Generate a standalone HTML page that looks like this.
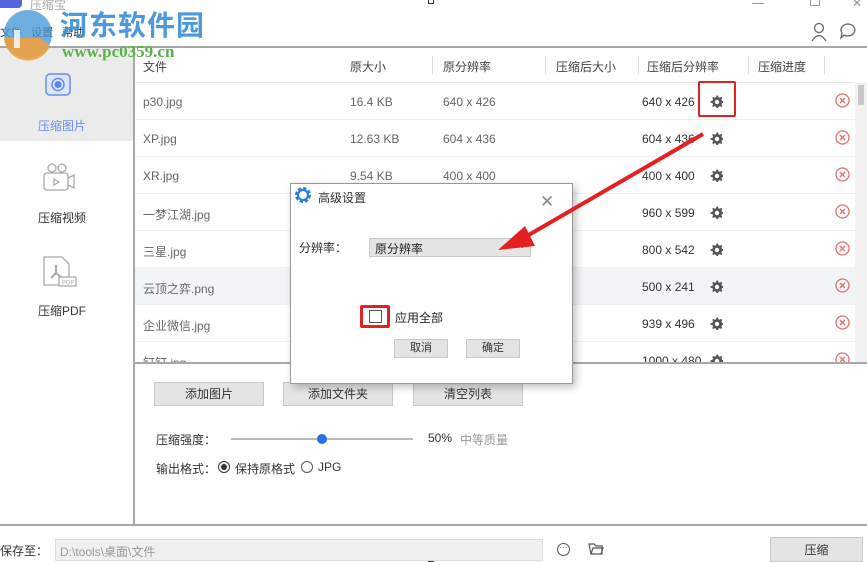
<!DOCTYPE html><html><head><meta charset="utf-8"><style>
*{margin:0;padding:0;box-sizing:border-box}
body{width:867px;height:562px;overflow:hidden;background:#fff;position:relative;font-family:"Liberation Sans","Noto Sans CJK SC",sans-serif;font-size:12px;color:#666}
.a{position:absolute;white-space:nowrap}
.row{position:absolute;left:135px;width:720px;height:37px;border-bottom:1px solid #eef0f2}
.row span{position:absolute;top:12px}
.g{position:absolute;left:575px;top:12px;width:13px;height:13px}
.x{position:absolute;left:700px;top:10px;width:15px;height:15px}
.btn{position:absolute;background:#e4e4e4;border:1px solid #c8c8c8;text-align:center;color:#333}
.logo{z-index:5}
</style></head><body>
<svg width="0" height="0" style="position:absolute"><defs>
<g id="gear"><path d="M6.5 0.5 L8 0.5 L8.4 2.2 L9.8 2.8 L11.3 1.9 L12.3 2.9 L11.4 4.4 L12 5.8 L13.5 6.2 L13.5 7.7 L12 8.1 L11.4 9.5 L12.3 11 L11.3 12 L9.8 11.1 L8.4 11.7 L8 13.3 L6.5 13.3 L6.1 11.7 L4.7 11.1 L3.2 12 L2.2 11 L3.1 9.5 L2.5 8.1 L0.5 7.7 L0.5 6.2 L2.5 5.8 L3.1 4.4 L2.2 2.9 L3.2 1.9 L4.7 2.8 L6.1 2.2Z" fill="#555"/><circle cx="7" cy="7" r="2.2" fill="#fff"/></g>
<g id="xx"><circle cx="7.5" cy="7.5" r="6.5" fill="none" stroke="#e07070" stroke-width="1.3"/><path d="M5 5 L10 10 M10 5 L5 10" stroke="#e07070" stroke-width="1.3"/></g>
</defs></svg>
<!-- title area -->
<div class="a" style="left:0;top:0;width:22px;height:8px;background:#5566dd;border-radius:0 0 4px 0"></div>
<div class="a" style="left:30px;top:-4px;color:#aaa;font-size:12px">压缩宝</div>
<div class="a" style="left:428px;top:-2px;width:6px;height:6px;border:1px solid #333"></div>
<div class="a" style="left:428px;top:556px;width:6px;height:6px;border:1px solid #333"></div>
<div class="a" style="left:752px;top:3px;width:12px;height:1px;background:#999"></div>
<div class="a" style="left:810px;top:-2px;width:10px;height:8px;border:1px solid #999"></div>
<div class="a" style="left:852px;top:-4px;color:#999;font-size:12px">✕</div>
<div class="a" style="left:0;top:24px;color:#333;font-size:11px">文件 &nbsp; 设置 &nbsp; 帮助</div>
<svg class="a logo" style="left:0;top:8px" width="60" height="56"><circle cx="28" cy="26" r="24" fill="#4a9ad8" opacity=".8"/><path d="M4 30 A24 24 0 0 0 50 38 L40 30 Z" fill="#f0a040" opacity=".9"/><rect x="14" y="22" width="6" height="18" fill="#fff" opacity=".8"/></svg>
<div class="a logo" style="left:60px;top:4px;font-size:28px;font-weight:bold;color:#3a8fd8;letter-spacing:1px;opacity:.9">河东软件园</div>
<div class="a logo" style="left:62px;top:42px;font-size:17px;font-weight:bold;color:#5ab04a;font-family:'Liberation Serif',serif">www.pc0359.cn</div>
<svg class="a" style="left:810px;top:22px" width="18" height="20"><circle cx="9" cy="6" r="4.5" fill="none" stroke="#666" stroke-width="1.3"/><path d="M2 19 Q9 8 16 19" fill="none" stroke="#666" stroke-width="1.3"/></svg>
<svg class="a" style="left:839px;top:22px" width="18" height="18"><path d="M9 2 A7 6 0 1 1 5 13 L2 16 L3 11 A7 6 0 0 1 9 2Z" fill="none" stroke="#666" stroke-width="1.3"/></svg>
<!-- borders -->
<div class="a" style="left:0;top:46px;width:867px;height:2px;background:#a8a8a8"></div>
<div class="a" style="left:133px;top:47px;width:2px;height:478px;background:#a8a8a8"></div>
<div class="a" style="left:0;top:524px;width:867px;height:2px;background:#a8a8a8"></div>
<!-- sidebar -->
<div class="a" style="left:0;top:48px;width:133px;height:93px;background:#ebebeb"></div>
<svg class="a" style="left:44px;top:71px" width="28" height="28"><rect x="2" y="3" width="24" height="21" rx="4" fill="#dde6fb" stroke="#6a8ef0" stroke-width="1.5"/><circle cx="14" cy="13.5" r="6" fill="none" stroke="#6a8ef0" stroke-width="1.5"/><circle cx="14" cy="13.5" r="3.5" fill="#5a86f5"/></svg>
<div class="a" style="left:38px;top:117px;color:#6b8ef0">压缩图片</div>
<svg class="a" style="left:42px;top:163px" width="34" height="30" fill="none" stroke="#aaa" stroke-width="1.3"><circle cx="10" cy="5" r="4"/><circle cx="20" cy="5" r="4"/><rect x="2" y="10" width="24" height="17" rx="3"/><path d="M26 15 L32 12 L32 25 L26 22"/><path d="M12 16 L17 19 L12 22Z"/></svg>
<div class="a" style="left:38px;top:209px;color:#333">压缩视频</div>
<svg class="a" style="left:42px;top:255px" width="36" height="34" fill="none" stroke="#aaa" stroke-width="1.3"><path d="M2 2 H20 L27 9 V30 H2Z"/><path d="M14 10 V18 M14 18 L9 23 M14 18 L20 23" stroke-width="2"/><rect x="17" y="22" width="17" height="9" fill="#fff"/><text x="20" y="29.5" font-size="6" fill="#aaa" stroke="none" font-family="Liberation Sans">PDF</text></svg>
<div class="a" style="left:38px;top:302px;color:#333">压缩PDF</div>
<!-- table header -->
<div class="row" style="top:47px;height:36px;border-bottom:1px solid #e8e8e8;color:#444">
<span style="left:8px;top:11px">文件</span><span style="left:215px;top:11px">原大小</span><span style="left:308px;top:11px">原分辨率</span><span style="left:421px;top:11px">压缩后大小</span><span style="left:512px;top:11px">压缩后分辨率</span><span style="left:623px;top:11px">压缩进度</span>
</div>
<div class="a" style="left:432px;top:56px;width:1px;height:18px;background:#ddd"></div>
<div class="a" style="left:545px;top:56px;width:1px;height:18px;background:#ddd"></div>
<div class="a" style="left:638px;top:56px;width:1px;height:18px;background:#ddd"></div>
<div class="a" style="left:748px;top:56px;width:1px;height:18px;background:#ddd"></div>
<div class="a" style="left:824px;top:56px;width:1px;height:18px;background:#ddd"></div>
<div class="a" style="left:855px;top:83px;width:12px;height:280px;background:#f2f2f2"></div>
<div class="a" style="left:858px;top:85px;width:6px;height:20px;background:#c8c8c8"></div>
<div class="row" style="top:83px"><span style="left:8px">p30.jpg</span><span style="left:215px">16.4 KB</span><span style="left:308px">640 x 426</span><span style="left:507px;color:#333">640 x 426</span><svg class="g"><use href="#gear"/></svg><svg class="x"><use href="#xx"/></svg></div>
<div class="row" style="top:120px"><span style="left:8px">XP.jpg</span><span style="left:215px">12.63 KB</span><span style="left:308px">604 x 436</span><span style="left:507px;color:#333">604 x 436</span><svg class="g"><use href="#gear"/></svg><svg class="x"><use href="#xx"/></svg></div>
<div class="row" style="top:157px"><span style="left:8px">XR.jpg</span><span style="left:215px">9.54 KB</span><span style="left:308px">400 x 400</span><span style="left:507px;color:#333">400 x 400</span><svg class="g"><use href="#gear"/></svg><svg class="x"><use href="#xx"/></svg></div>
<div class="row" style="top:194px"><span style="left:8px">一梦江湖.jpg</span><span style="left:507px;color:#333">960 x 599</span><svg class="g"><use href="#gear"/></svg><svg class="x"><use href="#xx"/></svg></div>
<div class="row" style="top:231px"><span style="left:8px">三星.jpg</span><span style="left:507px;color:#333">800 x 542</span><svg class="g"><use href="#gear"/></svg><svg class="x"><use href="#xx"/></svg></div>
<div class="row" style="top:268px;background:#f2f5f8"><span style="left:8px">云顶之弈.png</span><span style="left:507px;color:#333">500 x 241</span><svg class="g"><use href="#gear"/></svg><svg class="x"><use href="#xx"/></svg></div>
<div class="row" style="top:305px"><span style="left:8px">企业微信.jpg</span><span style="left:507px;color:#333">939 x 496</span><svg class="g"><use href="#gear"/></svg><svg class="x"><use href="#xx"/></svg></div>
<div class="row" style="top:342px;height:21px;overflow:hidden;border:0"><span style="left:8px">钉钉.jpg</span><span style="left:507px;color:#333">1000 x 480</span><svg class="g"><use href="#gear"/></svg><svg class="x"><use href="#xx"/></svg></div>
<div class="a" style="left:135px;top:362px;width:732px;height:2px;background:#a8a8a8"></div>
<!-- red box gear -->
<div class="a" style="left:698px;top:81px;width:38px;height:36px;border:2px solid #e52020;border-radius:2px"></div>
<!-- bottom panel -->
<div class="btn" style="left:154px;top:382px;width:110px;height:24px;line-height:22px">添加图片</div>
<div class="btn" style="left:283px;top:382px;width:110px;height:24px;line-height:22px">添加文件夹</div>
<div class="btn" style="left:413px;top:382px;width:110px;height:24px;line-height:22px">清空列表</div>
<div class="a" style="left:156px;top:431px;color:#333">压缩强度：</div>
<div class="a" style="left:231px;top:438px;width:182px;height:2px;background:#bbb"></div>
<div class="a" style="left:317px;top:434px;width:10px;height:10px;border-radius:50%;background:#2a6ef0"></div>
<div class="a" style="left:428px;top:431px;color:#333">50%</div>
<div class="a" style="left:460px;top:431px;color:#999">中等质量</div>
<div class="a" style="left:156px;top:460px;color:#333">输出格式：</div>
<div class="a" style="left:218px;top:461px;width:12px;height:12px;border:1px solid #333;border-radius:50%"></div>
<div class="a" style="left:221px;top:464px;width:6px;height:6px;background:#333;border-radius:50%"></div>
<div class="a" style="left:235px;top:460px;color:#333">保持原格式</div>
<div class="a" style="left:301px;top:461px;width:12px;height:12px;border:1px solid #555;border-radius:50%"></div>
<div class="a" style="left:318px;top:460px;color:#333">JPG</div>
<!-- footer -->
<div class="a" style="left:0;top:542px;color:#333">保存至：</div>
<div class="a" style="left:55px;top:539px;width:488px;height:22px;background:#f0f0f0;border:1px solid #ddd;color:#999;padding:3px 4px">D:\tools\桌面\文件</div>
<div class="a" style="left:557px;top:543px;width:13px;height:13px;border:1px solid #555;border-radius:50%;font-size:8px;line-height:8px;text-align:center;color:#555">···</div>
<svg class="a" style="left:588px;top:542px" width="16" height="14" fill="none" stroke="#555" stroke-width="1.2"><path d="M1 2 H6 L8 4 H14 V12 H3Z M3 12 L5 6 H15 L13 12"/></svg>
<div class="btn" style="left:770px;top:537px;width:93px;height:25px;line-height:24px">压缩</div>
<!-- dialog -->
<div class="a" style="left:290px;top:183px;width:283px;height:201px;background:#fff;border:1px solid #999;box-shadow:3px 3px 8px rgba(0,0,0,.25)"></div>
<svg class="a" style="left:294px;top:186px" width="18" height="18"><circle cx="9" cy="9" r="6" fill="none" stroke="#2a7ce0" stroke-width="4" stroke-dasharray="3 1.7"/><circle cx="9" cy="9" r="5" fill="none" stroke="#2a7ce0" stroke-width="2"/></svg>
<div class="a" style="left:318px;top:189px;color:#333">高级设置</div>
<div class="a" style="left:540px;top:193px;color:#888;font-size:17px;line-height:17px">✕</div>
<div class="a" style="left:299px;top:239px;color:#333">分辨率：</div>
<div class="a" style="left:369px;top:238px;width:162px;height:19px;background:#e4e4e4;border:1px solid #c8c8c8;color:#222;padding:1px 5px">原分辨率</div>
<div class="a" style="left:518px;top:240px;color:#555;font-size:10px">⌄</div>
<div class="a" style="left:360px;top:305px;width:30px;height:23px;border:3px solid #e52020;border-radius:2px"></div>
<div class="a" style="left:369px;top:310px;width:13px;height:13px;border:1px solid #555"></div>
<div class="a" style="left:395px;top:309px;color:#222">应用全部</div>
<div class="btn" style="left:394px;top:339px;width:54px;height:19px;line-height:17px;font-size:11px">取消</div>
<div class="btn" style="left:466px;top:339px;width:54px;height:19px;line-height:17px;font-size:11px">确定</div>
<!-- arrow -->
<svg class="a" style="left:0;top:0" width="867" height="562"><line x1="703" y1="134" x2="520" y2="240" stroke="#e52020" stroke-width="4"/><polygon points="498,250 525,226 535,246" fill="#e52020"/></svg>
</body></html>
